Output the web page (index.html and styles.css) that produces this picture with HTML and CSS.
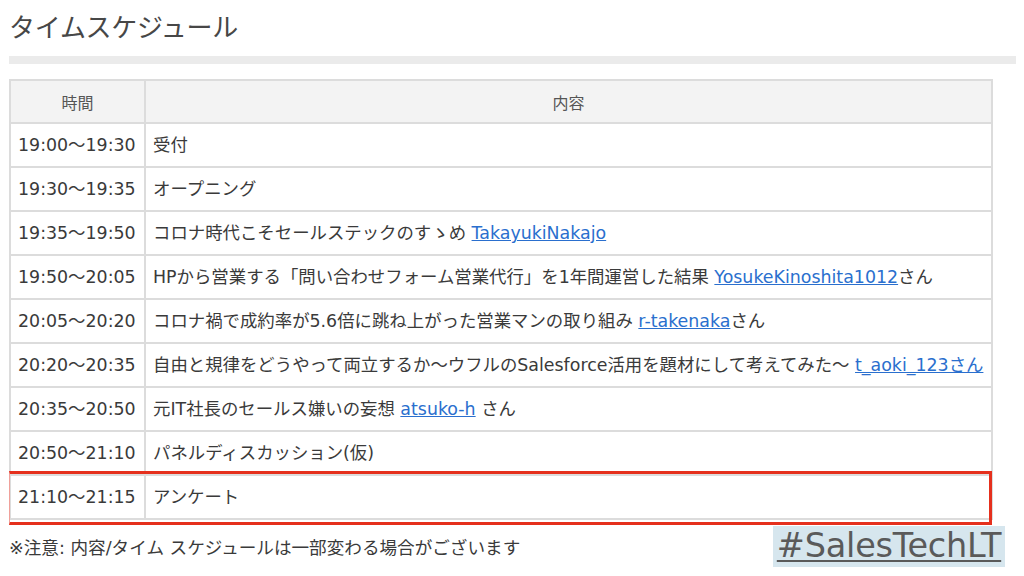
FILE: index.html
```html
<!DOCTYPE html>
<html lang="ja">
<head>
<meta charset="utf-8">
<link rel="stylesheet" href="styles.css">
</head>
<body>
<div class="page">
  <h1 class="title">タイムスケジュール</h1>
  <div class="rule"></div>
  <table class="schedule">
    <thead>
      <tr><th class="c-time">時間</th><th>内容</th></tr>
    </thead>
    <tbody>
      <tr><td class="c-time">19:00〜19:30</td><td>受付</td></tr>
      <tr><td class="c-time">19:30〜19:35</td><td>オープニング</td></tr>
      <tr><td class="c-time">19:35〜19:50</td><td>コロナ時代こそセールステックのすゝめ <a href="#">TakayukiNakajo</a></td></tr>
      <tr><td class="c-time">19:50〜20:05</td><td>HPから営業する「問い合わせフォーム営業代行」を1年間運営した結果 <a href="#">YosukeKinoshita1012</a>さん</td></tr>
      <tr><td class="c-time">20:05〜20:20</td><td>コロナ禍で成約率が5.6倍に跳ね上がった営業マンの取り組み <a href="#">r-takenaka</a>さん</td></tr>
      <tr><td class="c-time">20:20〜20:35</td><td>自由と規律をどうやって両立するか〜ウフルのSalesforce活用を題材にして考えてみた〜 <a href="#">t_aoki_123さん</a></td></tr>
      <tr><td class="c-time">20:35〜20:50</td><td>元IT社長のセールス嫌いの妄想 <a href="#">atsuko-h</a> さん</td></tr>
      <tr><td class="c-time">20:50〜21:10</td><td>パネルディスカッション(仮)</td></tr>
      <tr><td class="c-time">21:10〜21:15</td><td>アンケート</td></tr>
    </tbody>
  </table>
  <p class="note">※注意: 内容/タイム スケジュールは一部変わる場合がございます</p>
  <div class="highlight"></div>
  <div class="hashtag">#SalesTechLT</div>
</div>
</body>
</html>
```

FILE: styles.css
```css
html, body {
  margin: 0;
  padding: 0;
  background: #ffffff;
}

body {
  width: 1024px;
  height: 576px;
  overflow: hidden;
  font-family: "DejaVu Sans", "Noto Sans CJK JP", sans-serif;
  color: #3a3a3a;
}

.page {
  position: relative;
  width: 1024px;
  height: 576px;
  padding: 0 0 0 9px;
  box-sizing: border-box;
}

.title {
  margin: 0;
  padding-top: 6px;
  height: 43px;
  font-family: "Noto Sans CJK JP", sans-serif;
  font-weight: 400;
  font-size: 26px;
  line-height: 40px;
  color: #474747;
  letter-spacing: -0.3px;
}

.rule {
  margin-top: 7px;
  width: 1007px;
  height: 8px;
  background: #ebebeb;
}

.schedule {
  margin-top: 15px;
  width: 984px;
  border-collapse: collapse;
  font-size: 17.4px;
  table-layout: fixed;
}

.schedule th,
.schedule td {
  border: 2px solid #dcdcdc;
  padding: 0 0 0 7px;
  text-align: left;
  white-space: nowrap;
  height: 42px;
  line-height: 20px;
}

.schedule th {
  background: #f3f3f3;
  font-family: "Noto Sans CJK JP", sans-serif;
  font-weight: 400;
  font-size: 16px;
  color: #555555;
  text-align: center;
  height: 41px;
  padding: 0;
}

.schedule th.c-time {
  width: 133px;
}

.schedule a {
  color: #2a6fce;
  text-decoration: underline;
}

.note {
  margin: 16px 0 0 0;
  font-size: 17.6px;
  line-height: 24px;
  color: #3a3a3a;
}

.highlight {
  position: absolute;
  left: 9px;
  top: 471px;
  width: 983px;
  height: 54px;
  box-sizing: border-box;
  border: 3px solid #e5301d;
  border-left-width: 1px;
  border-left-color: #f0a09a;
}

.hashtag {
  position: absolute;
  left: 773px;
  top: 526px;
  width: 232px;
  height: 41px;
  background: #d6e6ee;
  color: #5a5a5a;
  font-family: "DejaVu Sans", sans-serif;
  font-size: 33.5px;
  line-height: 40px;
  text-align: center;
  text-decoration: underline;
  text-decoration-thickness: 2px;
  text-underline-offset: 3px;
  letter-spacing: -0.2px;
}
```
